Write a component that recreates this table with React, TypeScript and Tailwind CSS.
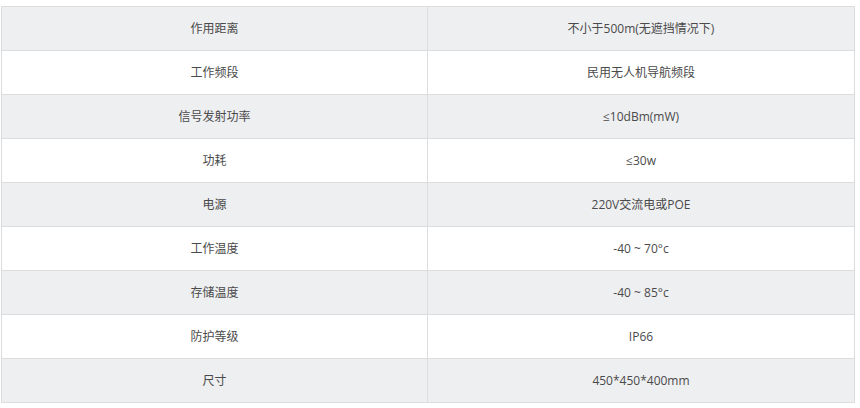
const specs = [
  ["作用距离", "不小于500m(无遮挡情况下)"],
  ["工作频段", "民用无人机导航频段"],
  ["信号发射功率", "≤10dBm(mW)"],
  ["功耗", "≤30w"],
  ["电源", "220V交流电或POE"],
  ["工作温度", "-40 ~ 70°c"],
  ["存储温度", "-40 ~ 85°c"],
  ["防护等级", "IP66"],
  ["尺寸", "450*450*400mm"],
];

const App = () => {
  return (
    <div
      className="w-[860px] h-[408px] bg-white pt-[6px] pl-[1px]"
      style={{ fontFamily: '"Open Sans", "Noto Sans CJK SC", sans-serif' }}
    >
      <table className="w-[854px] border-collapse table-fixed text-[12px] text-[#4a4a4a]">
        <colgroup>
          <col className="w-[426px]" />
          <col />
        </colgroup>
        <tbody>
          {specs.map(([label, value], i) => (
            <tr key={label} className={i % 2 === 0 ? "bg-[#eeeff1]" : "bg-white"}>
              <td className="h-[44px] p-0 pt-[1px] border border-[#dcdddf] text-center align-middle">
                {label}
              </td>
              <td className="h-[44px] p-0 pt-[1px] border border-[#dcdddf] text-center align-middle">
                {value}
              </td>
            </tr>
          ))}
        </tbody>
      </table>
    </div>
  );
};

export default App;
